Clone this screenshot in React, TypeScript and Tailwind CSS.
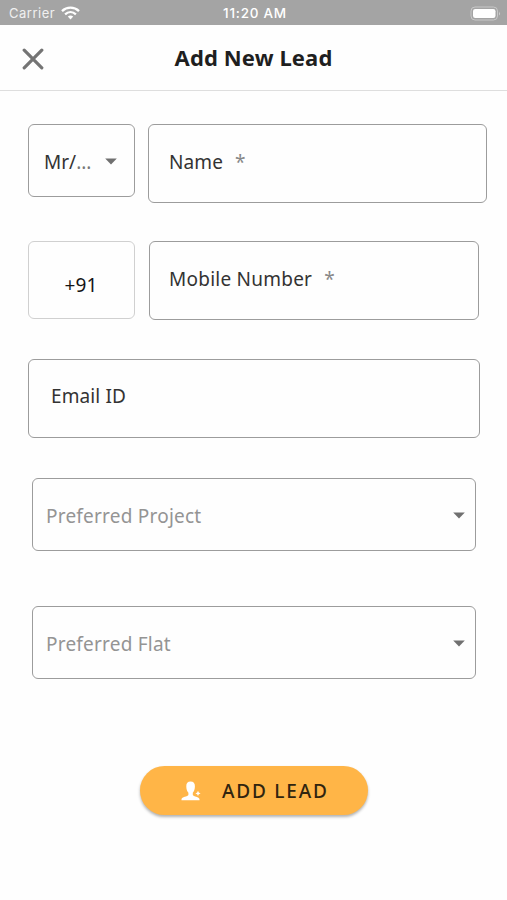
import React from "react";

function Caret() {
  return (
    <svg className="block h-[7px] w-3 shrink-0" viewBox="0 0 12 7">
      <path d="M0.2 0.4h11.6L6 6.6z" fill="#707070" />
    </svg>
  );
}

function StatusBar() {
  return (
    <div className="grid h-[25px] grid-cols-3 items-center bg-[#a4a4a4] pt-[2px] pr-[6px] pl-[9px] font-['Inter',sans-serif] text-[13px] leading-none text-white">
      <div className="flex items-center gap-[6px]">
        <span className="tracking-[0.5px] text-[#f0f0f0]">Carrier</span>
        <svg className="-mt-[2px] h-[14px] w-[19px]" viewBox="0 0 19 14" fill="none" stroke="white" strokeWidth="2.3">
          <path d="M1 5.1C5.8 0.5 13.2 0.5 18 5.1" />
          <path d="M4.1 8.3C7.3 5.3 11.7 5.3 14.9 8.3" />
          <path d="M6.8 10.5C8.4 9.1 10.6 9.1 12.2 10.5L9.5 13.4z" fill="white" stroke="none" />
        </svg>
      </div>
      <span className="text-center text-[13.5px] font-medium tracking-[0.75px] whitespace-nowrap">11:20 AM</span>
      <svg className="-mt-[1px] h-[15px] w-[31px] justify-self-end" viewBox="0 0 31 15">
        <rect x="1" y="1" width="26.5" height="13" rx="4" fill="none" stroke="#c8c8c8" />
        <rect x="3" y="3" width="22.5" height="9" rx="2.2" fill="white" />
        <path d="M29 5.5q1.8 2 0 4z" fill="#d0d0d0" />
      </svg>
    </div>
  );
}

export default function App() {
  return (
    <main className="h-[900px] w-[507px] overflow-hidden bg-[#fefefe] font-['Noto_Sans',sans-serif] text-[19px] leading-[26px] tracking-[0.12px] text-[#333]">
      <StatusBar />
      <header className="grid h-[66px] grid-cols-[66px_1fr_66px] items-center border-b border-[#dedede]">
        <button aria-label="Close" className="flex h-full items-center pt-[2px] pl-[22px]">
          <svg className="h-[22px] w-[22px]" viewBox="0 0 22 22" stroke="#747474" strokeWidth="3.2" strokeLinecap="round">
            <path d="M2.2 2.2l17.6 17.6M19.8 2.2L2.2 19.8" />
          </svg>
        </button>
        <h1 className="pb-px text-center text-[22px] leading-[30px] font-bold text-[#1f1f1f]">Add New Lead</h1>
      </header>

      <form className="flex flex-col pt-[33px] pl-7">
        <div className="flex h-[79px] items-start gap-[13px]">
          <div className="flex h-[73px] w-[107px] items-center justify-between rounded-[6px] border-[1.5px] border-[#9c9c9c] pt-[2px] pr-[17px] pl-[15px]">
            <span className="tracking-normal">Mr/<span className="text-[#777]">...</span></span>
            <Caret />
          </div>
          <div className="flex h-[79px] w-[339px] gap-3 rounded-[6px] border-[1.5px] border-[#9c9c9c] pt-6 pl-5">
            <span>Name</span>
            <span className="text-[#888]">*</span>
          </div>
        </div>

        <div className="mt-[38px] flex h-[79px] items-start gap-[14px]">
          <div className="flex h-[78px] w-[107px] items-center justify-center rounded-[6px] border-[1.5px] border-[#d0d0d0] pt-[9px] pr-px text-[#151515]">
            +91
          </div>
          <div className="flex h-[79px] w-[330px] gap-3 rounded-[6px] border-[1.5px] border-[#9c9c9c] pt-6 pl-[19px]">
            <span className="tracking-[0.24px]">Mobile Number</span>
            <span className="text-[#888]">*</span>
          </div>
        </div>

        <div className="mt-[39px] h-[79px] w-[452px] rounded-[6px] border-[1.5px] border-[#9c9c9c] pt-[23px] pl-[22px]">
          Email ID
        </div>

        <div className="mt-[40px] ml-[4px] flex h-[73px] w-[444px] items-center justify-between rounded-[6px] border-[1.5px] border-[#9c9c9c] pt-[2px] pr-[10px] pl-[13px] text-[#949494]">
          <span className="tracking-[0.22px]">Preferred Project</span>
          <Caret />
        </div>
        <div className="mt-[55px] ml-[4px] flex h-[73px] w-[444px] items-center justify-between rounded-[6px] border-[1.5px] border-[#9c9c9c] pt-[2px] pr-[10px] pl-[13px] text-[#949494]">
          <span className="tracking-[0.22px]">Preferred Flat</span>
          <Caret />
        </div>

        <button
          type="button"
          className="mt-[87px] ml-[112px] flex h-[49px] w-[228px] items-center rounded-full bg-[#ffb547] pl-[41px] font-medium tracking-[1.8px] text-[#30240f] shadow-[0_2px_3px_rgba(0,0,0,0.3)]"
        >
          <svg className="h-[20px] w-[20px]" viewBox="0 0 20 20" fill="white">
            <path d="M9.6 0.5C6.7 0.5 5.2 2.4 5.3 5.3C5.3 8.1 6 10.3 7.4 11.7V14.1C6.9 15.6 0.5 16.1 0.5 18.3V19.3H18.5V18.3C18.5 16.1 12.3 15.6 11.8 14.1V11.7C13.2 10.3 13.9 8.1 13.9 5.3C14 2.4 12.5 0.5 9.6 0.5z" />
            <path d="M17 9.8l.8 1.8 1.8.8-1.8.8-.8 1.8-.8-1.8-1.8-.8 1.8-.8z" />
          </svg>
          <span className="ml-[21px] text-[19px]">ADD LEAD</span>
        </button>
      </form>
    </main>
  );
}
